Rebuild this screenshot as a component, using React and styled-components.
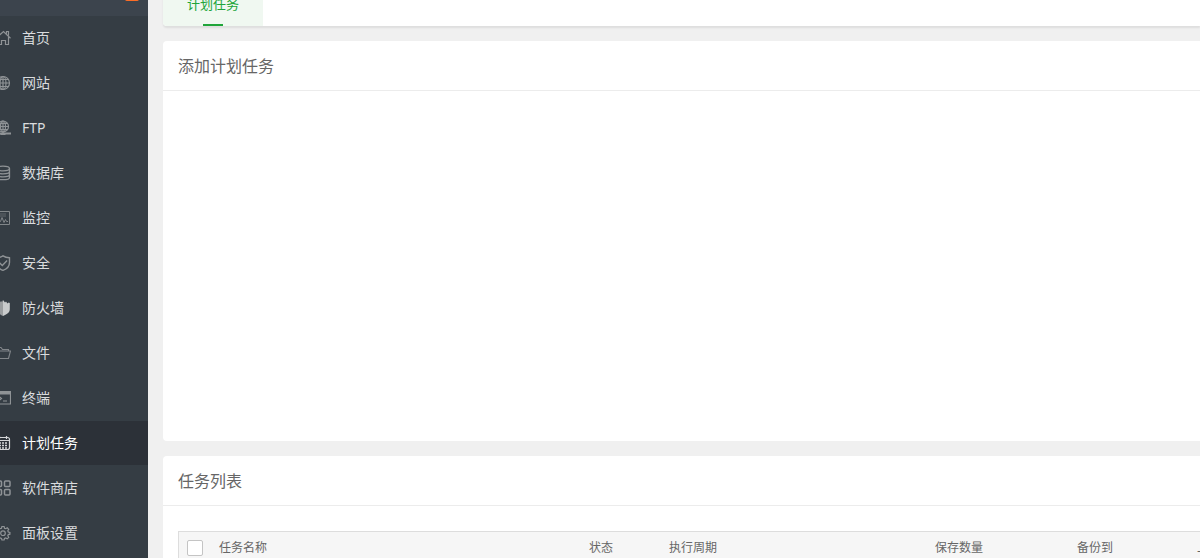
import React from 'react';
import styled, { createGlobalStyle } from 'styled-components';

const GlobalStyle = createGlobalStyle`
  *, *::before, *::after { box-sizing: border-box; }
  body {
    margin: 0;
    background: #f0f0f0;
    color: #666;
    font: 12px/20px "Noto Sans", "Noto Sans CJK SC", sans-serif;
  }
`;

const Shell = styled.div`
  display: flex;
  height: 100vh;
  overflow: hidden;
`;

const Sidebar = styled.aside`
  flex: 0 0 148px;
  overflow: hidden;
  background: #353d44;
`;

const ServerBar = styled.div`
  display: flex;
  align-items: center;
  justify-content: flex-end;
  height: 40px;
  margin-top: -24px;
  padding-right: 9px;
  background: #3c444d;
`;

const MessageBadge = styled.span`
  width: 14px;
  height: 10px;
  border-radius: 2px;
  background: #fc6d26;
`;

const Menu = styled.ul`
  display: flex;
  flex-direction: column;
  gap: 1px;
  margin: 0;
  padding: 0;
  list-style: none;
`;

const MenuLink = styled.a`
  display: flex;
  align-items: center;
  gap: 11px;
  height: 44px;
  margin-left: -5px;
  background: ${(p) => (p.$active ? '#2c3138' : 'transparent')};
  color: ${(p) => (p.$active ? '#fff' : '#dadcde')};
  font-size: 14px;
  text-decoration: none;
`;

const MenuIcon = styled.svg`
  flex: none;
  width: 16px;
  height: 16px;
  fill: none;
  stroke: ${(p) => (p.$active ? '#d4d6d8' : '#8f9396')};
`;

const Main = styled.main`
  display: flex;
  flex: 1;
  flex-direction: column;
  gap: 15px;
  min-width: 0;
  padding-left: 15px;
  overflow: hidden;
`;

const TabBar = styled.nav`
  display: flex;
  flex: none;
  height: 44px;
  margin-top: -18px;
  border-radius: 0 0 0 4px;
  background: #fff;
  box-shadow: 0 2px 2px rgba(0, 0, 0, 0.08);
`;

const Tab = styled.a`
  display: flex;
  align-items: center;
  justify-content: center;
  position: relative;
  width: 100px;
  border-radius: 0 0 0 4px;
  background: #f0f8f1;
  color: #20a53a;
  font-size: 13px;
  text-decoration: none;

  &::after {
    content: "";
    position: absolute;
    bottom: 0;
    left: 40px;
    width: 20px;
    height: 2px;
    background: #20a53a;
  }
`;

const Card = styled.section`
  flex: none;
  min-height: ${(p) => (p.$tall ? '400px' : '160px')};
  border-radius: 4px 0 0 4px;
  background: #fff;
`;

const CardTitle = styled.h2`
  height: 50px;
  margin: 0;
  padding: 0 15px;
  border-bottom: 1px solid #ececec;
  color: #666;
  font-size: 16px;
  font-weight: 400;
  line-height: 50px;
`;

const TableArea = styled.div`
  padding: 25px 0 15px 15px;
  overflow: hidden;
`;

const TaskTable = styled.table`
  width: 1400px;
  border: 1px solid #ddd;
  border-spacing: 0;
  table-layout: fixed;
`;

const HeadCell = styled.th`
  width: ${(p) => p.$width};
  height: 32px;
  padding: 0 8px;
  background: #f6f6f6;
  font-size: 12px;
  font-weight: 400;
  text-align: left;
  white-space: nowrap;
`;

const Checkbox = styled.input`
  display: block;
  width: 16px;
  height: 16px;
  margin: 0;
  appearance: none;
  border: 1px solid #c4c4c4;
  border-radius: 2px;
  background: #fff;
`;

const menu = [
  ['首页', <g strokeWidth="1.2"><path d="M1 8.2 8.500 1.500l7 6.700M3.500 7v7.500h3V10.500h4v4h3V7M11.500 3.500V1.500h2v4" /></g>],
  ['网站', <g strokeWidth="1.2"><circle cx="8" cy="8" r="6.500" /><ellipse cx="8" cy="8" rx="3" ry="6.500" /><path d="M8 1.500v13M1.500 8h13M2.500 4.500h11M2.500 11.500h11" /></g>],
  ['FTP', <g strokeWidth="1.2"><circle cx="8" cy="6.500" r="5.500" /><ellipse cx="8" cy="6.500" rx="2.500" ry="5.500" /><path d="M8 1v12M2.500 6.500h11M3.500 3.500h9M3.500 9.500h9" /><path d="M0 13.500h16M5.500 14h5" strokeWidth="1.800" /></g>],
  ['数据库', <g strokeWidth="1.300"><ellipse cx="8" cy="3.500" rx="6.500" ry="2.300" /><path d="M1.500 3.500v9c0 1.300 3 2.200 6.500 2.200s6.500-.9 6.500-2.200v-9M1.500 6.500c0 1.300 3 2.300 6.500 2.300s6.500-1 6.500-2.300M1.500 9.500c0 1.300 3 2.300 6.500 2.300s6.500-1 6.500-2.300" /></g>],
  ['监控', <g opacity=".85"><path d="M1.500 1.500h13v13h-13z" /><path d="M4 4h7M4 6h7" opacity=".6" /><path d="M3 11.500h2.500L7 7.500l2 5 1.500-3 1 2H13" /></g>],
  ['安全', <g strokeWidth="1.400"><path d="M8 .8c2 1.300 4 1.800 6.500 2v4.700c0 4-2.700 6.500-6.500 7.800-3.800-1.300-6.500-3.800-6.500-7.800V2.800C4 2.600 6 2.100 8 .8ZM4.500 7.700l2.800 2.800 4.800-5" /></g>],
  ['防火墙', <><path d="M8 0v16c-4-2-6.500-4-6.500-8V3l2-1 1 1L6 1l1 1Z" fill="#9b9ea0" stroke="none" /><path d="M8 0v16c4.500-2 6.800-3.500 6.800-7V3l-1.300-.5-1 1-1.500-2-1 1Z" fill="#c9cbcc" stroke="none" /></>],
  ['文件', <g opacity=".85" strokeWidth="1.100"><path d="M2 13.500v-11h4l1.500 2h6v2M2 13.500h11.500l2-7.500h-11L2 13.500" /></g>],
  ['终端', <g strokeWidth="1.200"><path d="M.5 1.500h15v12.500H.5z" /><path d="M.5 3h15" strokeWidth="3" /><path d="m3.500 6 3 2.500-3 2.500M8 11h4" /></g>],
  ['计划任务', <g strokeWidth="1.200"><rect x="1.500" y="2.500" width="13" height="12" rx="2" /><path d="M1.500 5.500h13M4.500 1v3M11.500 1v3" /><path d="M4 8h9M4 10.500h9M4 13h9" strokeWidth="1.700" strokeDasharray="2 1" /></g>],
  ['软件商店', <g strokeWidth="1.500"><rect x="1" y="1" width="5.500" height="5.500" rx="1" /><rect x="9.500" y="1" width="5.500" height="5.500" rx="1" /><rect x="1" y="9.500" width="5.500" height="5.500" rx="1" /><rect x="9.500" y="9.500" width="5.500" height="5.500" rx="1" /></g>],
  ['面板设置', <g strokeWidth="1.200"><path d="m6.900 1.500h2.200l.4 1.700 1.200.5 1.500-.9 1.500 1.500-.9 1.500.5 1.200 1.600.4v1.800l-1.600.4-.5 1.200.9 1.500-1.500 1.500-1.500-.9-1.200.5-.4 1.600H6.900l-.4-1.600-1.200-.5-1.500.9-1.500-1.500.9-1.500-.5-1.200-1.600-.4V7.400l1.600-.4.5-1.200-.9-1.500 1.500-1.500 1.500.9 1.200-.5Z" /><circle cx="8" cy="8.200" r="2.300" /></g>],
];

const columns = [
  ['任务名称', '370px'],
  ['状态', '80px'],
  ['执行周期', '266px'],
  ['保存数量', '142px'],
  ['备份到', '120px'],
  ['上次执行时间', 'auto'],
];

export default function App() {
  return (
    <Shell>
      <GlobalStyle />
      <Sidebar>
        <ServerBar><MessageBadge /></ServerBar>
        <Menu>
          {menu.map(([label, icon]) => {
            const active = label === '计划任务';
            return (
              <li key={label}>
                <MenuLink href="#" $active={active} aria-current={active ? 'page' : undefined}>
                  <MenuIcon viewBox="0 0 16 16" $active={active} aria-hidden="true">{icon}</MenuIcon>
                  {label}
                </MenuLink>
              </li>
            );
          })}
        </Menu>
      </Sidebar>
      <Main>
        <TabBar><Tab href="#">计划任务</Tab></TabBar>
        <Card $tall>
          <CardTitle>添加计划任务</CardTitle>
        </Card>
        <Card>
          <CardTitle>任务列表</CardTitle>
          <TableArea>
            <TaskTable>
              <thead>
                <tr>
                  <HeadCell $width="32px"><Checkbox type="checkbox" aria-label="全选" /></HeadCell>
                  {columns.map(([label, width]) => (
                    <HeadCell key={label} $width={width}>{label}</HeadCell>
                  ))}
                </tr>
              </thead>
            </TaskTable>
          </TableArea>
        </Card>
      </Main>
    </Shell>
  );
}
